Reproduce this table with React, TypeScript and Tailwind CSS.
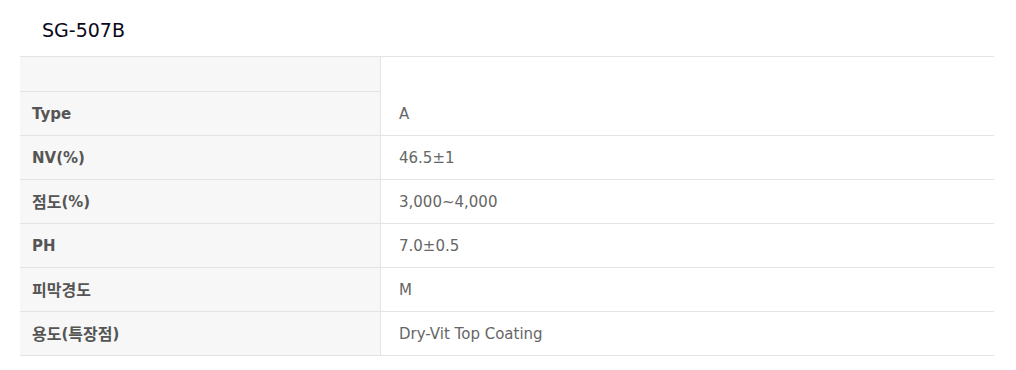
import React from 'react';

const rows: { label: string; value: string }[] = [
  { label: 'Type', value: 'A' },
  { label: 'NV(%)', value: '46.5±1' },
  { label: '점도(%)', value: '3,000~4,000' },
  { label: 'PH', value: '7.0±0.5' },
  { label: '피막경도', value: 'M' },
  { label: '용도(특장점)', value: 'Dry-Vit Top Coating' },
];

// Hangul runs are set a touch larger so they match the Latin text's weight
function Label({ text }: { text: string }) {
  const parts = text.split(/([\uAC00-\uD7A3]+)/).filter(Boolean);
  return (
    <>
      {parts.map((p, i) =>
        /[\uAC00-\uD7A3]/.test(p) ? (
          <span key={i} className="text-[16px]">{p}</span>
        ) : (
          <span key={i}>{p}</span>
        )
      )}
    </>
  );
}

export default function App() {
  return (
    <div className="w-[1016px] h-[370px] bg-white overflow-hidden">
      <div className="h-[56px] pt-[21px] pl-[42px]">
        <h1 className="text-[19px] leading-[19px] text-[#0a0a1a] font-normal [font-family:'DejaVu_Sans',sans-serif]">
          SG-507B
        </h1>
      </div>

      <div className="ml-[20px] w-[974px] border-t border-[#e3e3e3] grid grid-cols-[361px_1fr]">
        {/* empty header row */}
        <div className="h-[35px] bg-[#f7f7f7] border-r border-b border-[#e3e3e3]" />
        <div className="h-[35px]" />

        {rows.map((r) => (
          <React.Fragment key={r.label}>
            <div className="h-[44px] pt-[2px] bg-[#f7f7f7] border-r border-b border-[#e3e3e3] pl-[12px] flex items-center text-[15px] font-bold text-[#555] [font-family:'DejaVu_Sans','Noto_Sans_CJK_KR',sans-serif]">
              <Label text={r.label} />
            </div>
            <div className="h-[44px] pt-[2px] border-b border-[#e3e3e3] pl-[18px] flex items-center text-[15px] text-[#666] [font-family:'DejaVu_Sans','Noto_Sans_CJK_KR',sans-serif]">
              {r.value}
            </div>
          </React.Fragment>
        ))}
      </div>
    </div>
  );
}
